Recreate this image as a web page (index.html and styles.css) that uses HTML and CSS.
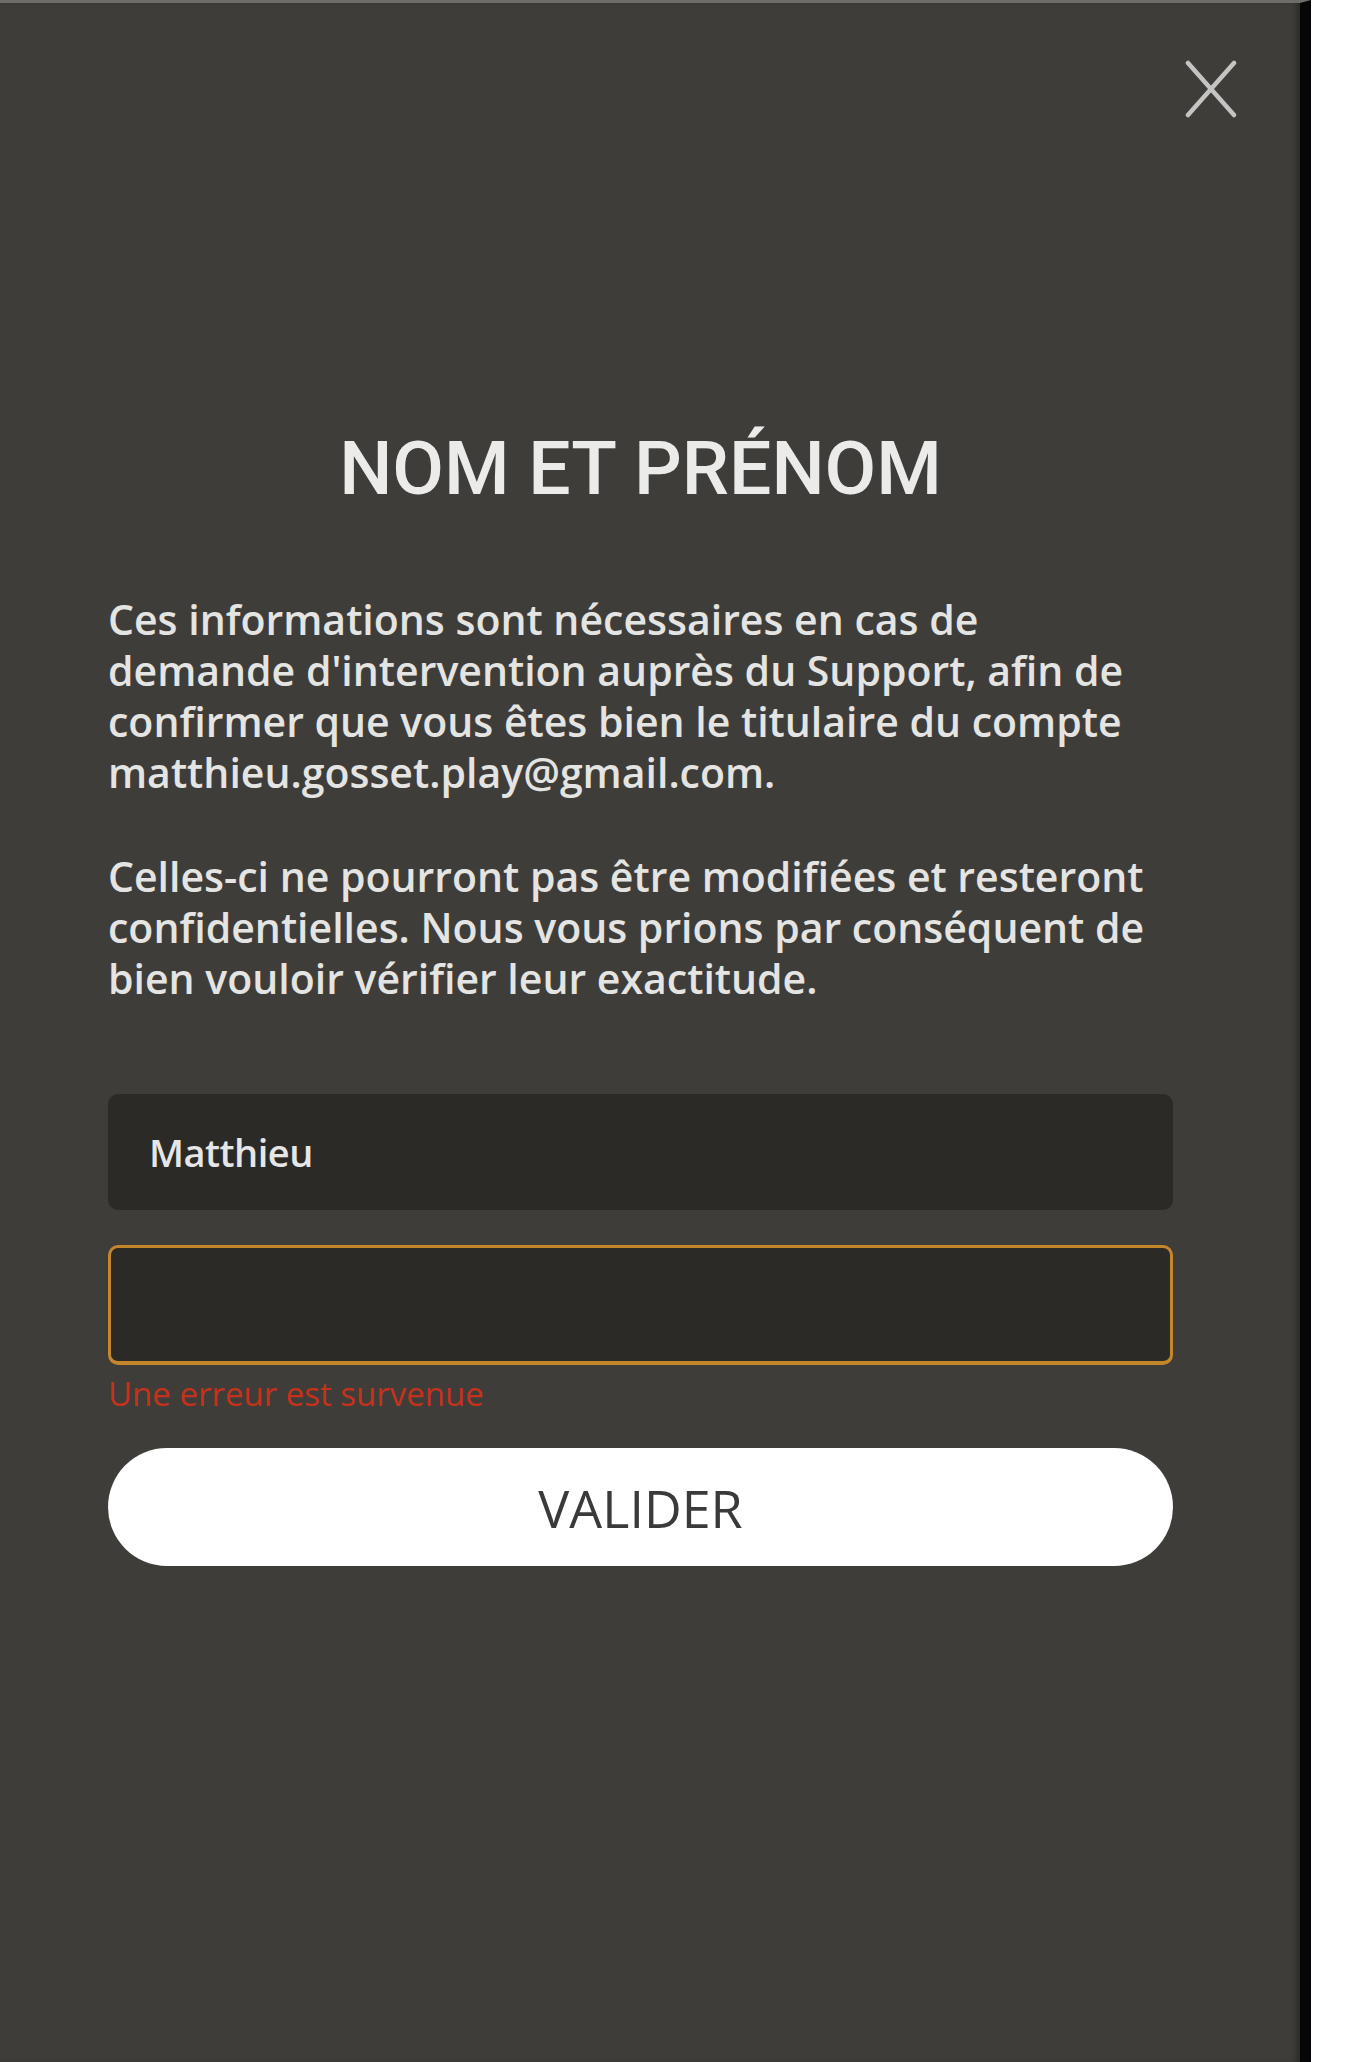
FILE: index.html
```html
<!DOCTYPE html>
<html>
<head>
    <title>Nom et prénom</title>
    <link rel="stylesheet" href="styles.css">
</head>
<body>
    <div class="sheet">
        <div class="topbar">
            <button class="close-btn" aria-label="Fermer">
                <svg viewBox="0 0 52 58" width="52" height="58">
                    <path d="M3 3 L49 55 M49 3 L3 55" stroke="#c4c4c2" stroke-width="4.5" stroke-linecap="round" fill="none"/>
                </svg>
            </button>
        </div>

        <div class="content">
            <h1>NOM ET PRÉNOM</h1>

            <p class="info">Ces informations sont nécessaires en cas de demande d'intervention auprès du Support, afin de confirmer que vous êtes bien le titulaire du compte matthieu.gosset.play@gmail.com.</p>
            <p class="info">Celles-ci ne pourront pas être modifiées et resteront confidentielles. Nous vous prions par conséquent de bien vouloir vérifier leur exactitude.</p>

            <form class="name-form">
                <input class="field" type="text" value="Matthieu">
                <input class="field field-error" type="text" value="">
                <div class="error-msg">Une erreur est survenue</div>
                <button class="submit-btn" type="button">VALIDER</button>
            </form>
        </div>
    </div>
</body>
</html>
```

FILE: styles.css
```css
* {
    box-sizing: border-box;
}
body {
    margin: 0;
    background: #ffffff;
    font-family: "Open Sans", "Liberation Sans", sans-serif;
}
.sheet {
    width: 1311px;
    min-height: 2062px;
    background: #3f3d39;
    border-top: 3px solid #6e6d6a;
    border-right: 11px solid #060606;
    box-shadow: inset -6px 0 6px -3px rgba(0, 0, 0, 0.35);
}
.topbar {
    display: flex;
    justify-content: flex-end;
    padding: 57px 63px 0 0;
}
.close-btn {
    background: none;
    border: none;
    padding: 0;
    width: 52px;
    height: 58px;
    cursor: pointer;
}
.close-btn svg {
    display: block;
}
.content {
    width: 1173px;
    padding-left: 108px;
}
h1 {
    margin: 305px 0 0;
    font-family: Roboto, "Liberation Sans", sans-serif;
    font-size: 75px;
    line-height: 91px;
    font-weight: 500;
    color: #ebebea;
    text-align: center;
}
.info {
    margin: 0;
    padding-right: 20px;
    font-size: 41px;
    line-height: 51px;
    font-weight: 600;
    color: #e4e4e3;
}
h1 + .info {
    margin-top: 80px;
}
.info + .info {
    margin-top: 53px;
}
.name-form {
    display: flex;
    flex-direction: column;
    margin-top: 90px;
}
.field {
    height: 116px;
    width: 100%;
    border: 3px solid transparent;
    border-radius: 10px;
    background: #2b2a27;
    padding: 0 38px;
    font-family: "Open Sans", "Liberation Sans", sans-serif;
    font-size: 38px;
    font-weight: 600;
    letter-spacing: -0.5px;
    color: #e6e6e6;
    outline: none;
}
.field-error {
    height: 120px;
    margin-top: 35px;
    border-color: #c4862b;
    border-bottom-width: 4px;
}
.error-msg {
    margin-top: 9px;
    font-size: 33px;
    line-height: 40px;
    color: #c5321c;
}
.submit-btn {
    margin-top: 34px;
    height: 118px;
    width: 100%;
    border: none;
    border-radius: 59px;
    background: #ffffff;
    font-family: "Open Sans", "Liberation Sans", sans-serif;
    font-size: 52px;
    font-weight: 400;
    color: #3a3a3a;
    cursor: pointer;
}
```
